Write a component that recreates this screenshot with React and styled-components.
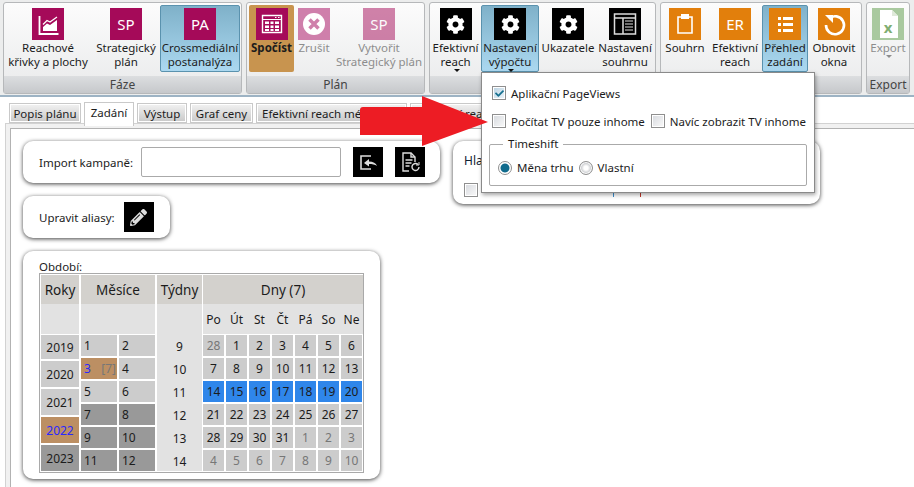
import styled, { createGlobalStyle } from 'styled-components';
import { FaCog, FaPencilAlt, FaCheck } from 'react-icons/fa';

const FONT = '"Noto Sans", "Open Sans", sans-serif';

const GlobalStyle = createGlobalStyle`
  html, body {
    background: #fff;
    height: 487px;
    margin: 0;
    overflow: hidden;
    width: 914px;
  }

  body {
    color: #1c1c1c;
    font-family: ${FONT};
    font-size: 11.5px;
  }
`;

const Page = styled.div`
  height: 487px;
  overflow: hidden;
  position: relative;
  width: 914px;
`;

/* ribbon */
const Ribbon = styled.div`
  background: #eceded;
  border-bottom: 2px solid #9db3c4;
  box-sizing: border-box;
  display: flex;
  gap: 4px;
  height: 97px;
  padding: 2px 0 0 3px;
`;

const Group = styled.section`
  background: linear-gradient(#fcfcfc, #e9eaeb);
  border: 1px solid #b6b8ba;
  border-radius: 3px;
  box-sizing: border-box;
  display: flex;
  flex-direction: column;
  height: 92px;
  width: ${(p) => p.$w}px;
`;

const GroupButtons = styled.div`
  display: flex;
  flex: 1;
  padding-top: 2px;
`;

const GroupLabel = styled.div`
  background: linear-gradient(#dcdee0, #c6c8cb);
  color: #444;
  font-size: 12px;
  height: 17px;
  line-height: 17px;
  text-align: center;
`;

const RibbonButton = styled.div`
  align-items: center;
  background: ${(p) =>
    p.$active ? 'linear-gradient(#7fb1c9, #abd8f0)' : p.$run ? '#c8944f' : 'transparent'};
  border: 1px solid ${(p) => (p.$active ? '#5a92ae' : 'transparent')};
  border-radius: 2px;
  box-sizing: border-box;
  color: ${(p) => (p.$off ? '#8d8d8d' : '#1c1c1c')};
  display: flex;
  flex-direction: column;
  font-weight: ${(p) => (p.$run ? 700 : 400)};
  height: 67px;
  line-height: 14px;
  margin-left: ${(p) => p.$ml || 0}px;
  padding-top: 2px;
  text-align: center;
  white-space: nowrap;
  width: ${(p) => p.$w}px;
`;

const IconTile = styled.div`
  align-items: center;
  background: ${(p) => p.$bg};
  color: #fff;
  display: flex;
  flex: none;
  font-size: 15px;
  height: 32px;
  justify-content: center;
  margin-bottom: 1px;
  opacity: ${(p) => (p.$off ? 0.5 : 1)};
  width: 32px;
`;

const Caret = styled.i`
  border-left: 3px solid transparent;
  border-right: 3px solid transparent;
  border-top: 3px solid ${(p) => (p.$off ? '#8d8d8d' : '#111')};
  display: inline-block;
  margin-left: 2px;
  vertical-align: 3px;
`;

/* tabs */
const TabBar = styled.div`
  align-items: flex-end;
  display: flex;
  gap: 3px;
  height: 21px;
  margin-top: 5px;
  padding-left: 9px;
  position: relative;
  z-index: 1;
`;

const Tab = styled.div`
  background: ${(p) => (p.$active ? '#fff' : 'linear-gradient(#f2f2f2, #c8c8c8)')};
  border: 1px solid #c9c9c9;
  border-bottom: ${(p) => (p.$active ? '0' : '1px solid #c9c9c9')};
  box-shadow: inset 0 0 0 1px #fff;
  box-sizing: border-box;
  flex: none;
  height: ${(p) => (p.$active ? 24 : 20)}px;
  line-height: 19px;
  margin-bottom: ${(p) => (p.$active ? -3 : 0)}px;
  padding-left: ${(p) => (p.$start ? 5 : 0)}px;
  text-align: ${(p) => (p.$start ? 'left' : 'center')};
  white-space: nowrap;
  width: ${(p) => p.$w}px;
`;

const TabPanel = styled.div`
  background: #f1f1f1;
  border: 1px solid #d2d2d2;
  box-sizing: border-box;
  height: 380px;
  margin-left: 5px;
  padding: 4px;
  width: 920px;
`;

const TabContent = styled.div`
  background: #fff;
  border: 1px solid #b2b2b2;
  box-sizing: border-box;
  display: flex;
  gap: 13px;
  height: 100%;
  padding: 12px 12px 0;
`;

const Column = styled.div`
  display: flex;
  flex-direction: column;
  gap: 13px;
`;

const Card = styled.div`
  background: #fff;
  border-radius: 10px;
  box-shadow: 0 1px 4px rgba(0, 0, 0, 0.75);
  box-sizing: border-box;
  width: ${(p) => p.$w}px;
`;

const FieldCard = styled(Card)`
  align-items: center;
  display: flex;
  height: 42px;
  padding: 0 15px 0 16px;
  white-space: nowrap;
`;

const ImportInput = styled.input`
  background: #fff;
  border: 1px solid #aaa;
  border-radius: 2px;
  box-sizing: border-box;
  height: 30px;
  margin: 0 12px 0 auto;
  width: 200px;
`;

const BlackButton = styled.div`
  align-items: center;
  background: #000;
  color: #ddd;
  display: flex;
  flex: none;
  font-size: 17px;
  height: 30px;
  justify-content: center;
  margin-left: ${(p) => p.$ml || 0}px;
  width: 30px;
`;

const MainCardLabel = styled.div`
  color: #1c1c1c;
  height: 13px;
  line-height: 14px;
`;

const MainCard = styled(Card)`
  height: 228px;
  padding: 9px 0 0 16px;
`;

const AsideCard = styled(Card)`
  height: 63px;
  padding: 11px 11px 0;
`;

const AsideTitle = styled.div`
  color: #123;
  font-size: 12px;
  height: 30px;
  line-height: 18px;
`;

const AsideRow = styled.div`
  align-items: flex-end;
  display: flex;
  height: 15px;
`;

const Descender = styled.i`
  background: ${(p) => p.$c};
  height: 4px;
  margin-left: ${(p) => p.$ml}px;
  width: 1px;
`;

/* calendar */
const Calendar = styled.div`
  border: 1px solid #a9a9a9;
  box-sizing: border-box;
  display: flex;
  height: 200px;
  padding: 1px;
  width: 325px;
`;

const CalColumn = styled.div`
  background: ${(p) => (p.$fill ? '#e2e2e2' : 'transparent')};
  display: flex;
  flex: none;
  flex-direction: column;
  margin-right: ${(p) => p.$mr || 0}px;
  width: ${(p) => p.$w}px;
`;

const CalHead = styled.div`
  align-items: center;
  background: #d3d1cd;
  display: flex;
  flex: none;
  font-size: 13.5px;
  height: 29px;
  justify-content: center;
`;

const CalSub = styled.div`
  background: #e2e2e2;
  display: grid;
  flex: none;
  font-size: 12px;
  grid-template-columns: repeat(7, 21px);
  column-gap: 2px;
  height: 30px;
  margin-bottom: 1px;
  place-items: center;
`;

const YearList = styled.div`
  display: grid;
  gap: 2px;
  grid-template-rows: 24px repeat(4, 26px);
`;

const MonthGrid = styled.div`
  display: grid;
  gap: 2px;
  grid-template-columns: 36px 36px;
  grid-auto-rows: 21px;
`;

const DayGrid = styled.div`
  display: grid;
  gap: 2px;
  grid-template-columns: repeat(7, 21px);
  grid-auto-rows: 21px;
`;

const WeekList = styled.div`
  display: grid;
  grid-auto-rows: 23px;
`;

const WeekNumber = styled.div`
  align-items: center;
  display: flex;
  font-size: 12px;
  justify-content: center;
`;

const tones = {
  light: '#cccccc',
  dark: '#999999',
  picked: '#bc8f63',
  blue: '#2f86ea',
};

const Cell = styled.div`
  align-items: center;
  background: ${(p) => tones[p.$tone]};
  color: ${(p) => (p.$picked ? '#2828ff' : p.$muted ? '#777' : '#1c1c1c')};
  display: flex;
  font-size: 12px;
  justify-content: ${(p) => (p.$left ? 'space-between' : 'center')};
  padding-left: ${(p) => (p.$left ? 3 : 0)}px;
  white-space: nowrap;
`;

const MonthTag = styled.span`
  color: #777;
  padding-right: 1px;
`;

/* dropdown */
const Menu = styled.div`
  background: #fff;
  border: 1px solid #8a8a8a;
  box-shadow: 1px 2px 4px rgba(0, 0, 0, 0.35);
  box-sizing: border-box;
  height: 121px;
  left: 481px;
  padding: 13px 7px 0 7px;
  position: absolute;
  top: 72px;
  width: 334px;
  z-index: 3;
`;

const MenuRow = styled.div`
  align-items: center;
  display: flex;
  gap: 6px;
  height: 14px;
  margin-bottom: 14px;
  padding-left: 3px;
`;

const Option = styled.label`
  align-items: center;
  display: flex;
  gap: 5px;
  white-space: nowrap;
`;

const Box = styled.span`
  align-items: center;
  background: ${(p) => (p.$on ? 'linear-gradient(135deg, #b9d2e2, #eef5fa)' : 'linear-gradient(135deg, #d6d9de, #fafafa)')};
  border: 1px solid #8f8f8f;
  box-shadow: inset 0 0 0 1px #fff;
  box-sizing: border-box;
  color: #17708f;
  display: flex;
  flex: none;
  font-size: 9px;
  height: 14px;
  justify-content: center;
  width: 14px;
`;

const Round = styled(Box)`
  background: ${(p) => (p.$on ? 'radial-gradient(#0f6a8c 0 4px, #fff 5px)' : 'radial-gradient(#fff 0 2px, #c9cbce 5px)')};
  border-radius: 50%;
`;

const Timeshift = styled.fieldset`
  border: 1px solid #aaa;
  border-radius: 2px;
  box-sizing: border-box;
  height: 49px;
  margin: -5px 0 0;
  padding: 9px 0 0 8px;
  width: 318px;
`;

const TimeshiftLegend = styled.legend`
  line-height: 14px;
  margin-left: 5px;
  padding: 0 5px;
`;

const RadioRow = styled.div`
  align-items: center;
  display: flex;
  gap: 5px;
`;

const Arrow = styled.svg`
  height: 60px;
  left: 358px;
  position: absolute;
  top: 92px;
  width: 132px;
  z-index: 4;
`;

/* drawings */
const MAGENTA = '#a50a59';
const ORANGE = '#e27f0c';

const ChartIcon = () => (
  <svg width="32" height="32" viewBox="0 0 32 32">
    <path d="M7.500 8v18h19" fill="none" stroke="#fff" strokeWidth="1.800" />
    <path d="M11 23v-4l4-3.500 3 1.500 7-5v11z" fill="#fff" />
    <path d="M11 16.500l4-4 3 1.500 7-5" fill="none" stroke="#fff" strokeWidth="1.300" />
  </svg>
);

const CalcIcon = () => (
  <svg width="32" height="32" viewBox="0 0 32 32" fill="#fff">
    <path d="M6.500 7.500h19v17h-19z" fill="none" stroke="#fff" strokeWidth="1.400" />
    <path d="M6.500 11.500h19" stroke="#fff" strokeWidth="1" />
    <path d="M19 9h1.500v1H19zM22 9h1.500v1H22zM9 13.500h4v2.500H9zM14.500 13.500h3v2.500h-3zM19 13.500h4v2.500h-4zM9 17.500h4V20H9zM14.500 17.500h3V20h-3zM19 17.500h4V20h-4zM9 21h4v2H9zM14.500 21h3v2h-3zM19 21h4v2h-4z" />
  </svg>
);

const CancelIcon = () => (
  <svg width="32" height="32" viewBox="0 0 32 32">
    <circle cx="16" cy="16" r="11" fill="#fff" />
    <path d="M11.500 11.500l9 9M20.500 11.500l-9 9" stroke="#cf7fab" strokeWidth="3.500" />
  </svg>
);

const SummaryIcon = () => (
  <svg width="32" height="32" viewBox="0 0 32 32" fill="none" stroke="#ddd">
    <path d="M5.500 6h21v20h-21z" strokeWidth="1.500" />
    <path d="M6 10h20M14 10v16" strokeWidth="1.500" />
    <path d="M16 13h8M16 16h8M16 19h8M16 22h8" strokeWidth="1.200" />
  </svg>
);

const ClipboardIcon = () => (
  <svg width="32" height="32" viewBox="0 0 32 32" fill="none" stroke="#fff" strokeWidth="1.600">
    <path d="M12 9H9v16h14V9h-3" />
    <path d="M12 6h8v5h-8z" fill="#fff" stroke="none" />
  </svg>
);

const ListIcon = () => (
  <svg width="32" height="32" viewBox="0 0 32 32" fill="#fff">
    <path d="M9 9h3v3H9zM9 15h3v3H9zM9 21h3v3H9zM14 9h10v3H14zM14 15h10v3H14zM14 21h10v3H14z" />
  </svg>
);

const RefreshIcon = () => (
  <svg width="32" height="32" viewBox="0 0 32 32" fill="none">
    <path d="M11 10.500A9 9 0 1 1 8 17" stroke="#fff" strokeWidth="2.600" />
    <path d="M7 7h8v8z" fill="#fff" />
  </svg>
);

const ExcelIcon = () => (
  <svg width="32" height="32" viewBox="0 0 32 32">
    <path d="M8 2h12l6 6v22H8z" fill="#fff" />
    <path d="M20 2v6h6z" fill="#dfe9da" />
    <text x="16" y="25" fontSize="15" fontWeight="700" fontFamily={FONT} textAnchor="middle" fill="#7fae72">x</text>
  </svg>
);

const ImportIcon = () => (
  <svg width="22" height="22" viewBox="0 0 22 22" fill="none" stroke="#ddd" strokeWidth="1.600">
    <path d="M14 5H4v13h10" />
    <path d="M20 15c-1-3-4-4.500-8-4.500V8l-5 4 5 3.500V13c3 0 6 .5 8 2z" fill="#ddd" stroke="none" />
  </svg>
);

const FileRefreshIcon = () => (
  <svg width="24" height="24" viewBox="0 0 24 24" fill="none" stroke="#ddd" strokeWidth="1.400">
    <path d="M11 21H5V3h8l4 4v5" />
    <path d="M13 3v4h4" />
    <path d="M7.500 10h7M7.500 13h6M7.500 16h4" />
    <path d="M21 17a3.500 3.500 0 1 1-1-2.500" />
    <path d="M21 12v3h-3" strokeWidth="1" />
  </svg>
);

const months = [
  { n: 1, tone: 'light' },
  { n: 2, tone: 'light' },
  { n: 3, tone: 'picked', tag: '[7]' },
  { n: 4, tone: 'light' },
  { n: 5, tone: 'light' },
  { n: 6, tone: 'light' },
  { n: 7, tone: 'dark' },
  { n: 8, tone: 'dark' },
  { n: 9, tone: 'dark' },
  { n: 10, tone: 'dark' },
  { n: 11, tone: 'dark' },
  { n: 12, tone: 'dark' },
];

const years = [
  { y: 2019, tone: 'light' },
  { y: 2020, tone: 'light' },
  { y: 2021, tone: 'light' },
  { y: 2022, tone: 'picked' },
  { y: 2023, tone: 'dark' },
];

const dayNames = ['Po', 'Út', 'St', 'Čt', 'Pá', 'So', 'Ne'];
const weeks = [9, 10, 11, 12, 13, 14];

const days = [
  28, 1, 2, 3, 4, 5, 6, 7, 8, 9, 10, 11, 12, 13, 14, 15, 16, 17, 18, 19, 20, 21, 22, 23, 24, 25, 26,
  27, 28, 29, 30, 31, 1, 2, 3, 4, 5, 6, 7, 8, 9, 10,
];

const isOtherMonth = (i) => i === 0 || i >= 32;
const isSelectedWeek = (i) => i >= 14 && i < 21;

function App() {
  return (
    <Page>
      <GlobalStyle />
      <Ribbon>
        <Group $w={239}>
          <GroupButtons>
            <RibbonButton $w={88}>
              <IconTile $bg={MAGENTA}><ChartIcon /></IconTile>
              Reachové<br />křivky a plochy
            </RibbonButton>
            <RibbonButton $w={68}>
              <IconTile $bg={MAGENTA}>SP</IconTile>
              Strategický<br />plán
            </RibbonButton>
            <RibbonButton $w={80} $active>
              <IconTile $bg={MAGENTA}>PA</IconTile>
              Crossmediální<br />postanalýza
            </RibbonButton>
          </GroupButtons>
          <GroupLabel>Fáze</GroupLabel>
        </Group>

        <Group $w={179}>
          <GroupButtons>
            <RibbonButton $w={45} $ml={2} $run>
              <IconTile $bg={MAGENTA}><CalcIcon /></IconTile>
              Spočíst
            </RibbonButton>
            <RibbonButton $w={40} $off>
              <IconTile $bg="#cf7fab"><CancelIcon /></IconTile>
              Zrušit
            </RibbonButton>
            <RibbonButton $w={90} $off>
              <IconTile $bg={MAGENTA} $off>SP</IconTile>
              Vytvořit<br />Strategický plán
            </RibbonButton>
          </GroupButtons>
          <GroupLabel>Plán</GroupLabel>
        </Group>

        <Group $w={227}>
          <GroupButtons>
            <RibbonButton $w={51}>
              <IconTile $bg="#000"><FaCog size={19} /></IconTile>
              Efektivní<br />reach<Caret />
            </RibbonButton>
            <RibbonButton $w={58} $active>
              <IconTile $bg="#000"><FaCog size={19} /></IconTile>
              Nastavení<br />výpočtu<Caret />
            </RibbonButton>
            <RibbonButton $w={58}>
              <IconTile $bg="#000"><FaCog size={19} /></IconTile>
              Ukazatele
            </RibbonButton>
            <RibbonButton $w={56}>
              <IconTile $bg="#000"><SummaryIcon /></IconTile>
              Nastavení<br />souhrnu
            </RibbonButton>
          </GroupButtons>
          <GroupLabel />
        </Group>

        <Group $w={202}>
          <GroupButtons>
            <RibbonButton $w={48}>
              <IconTile $bg={ORANGE}><ClipboardIcon /></IconTile>
              Souhrn
            </RibbonButton>
            <RibbonButton $w={52}>
              <IconTile $bg={ORANGE}>ER</IconTile>
              Efektivní<br />reach
            </RibbonButton>
            <RibbonButton $w={46} $ml={1} $active>
              <IconTile $bg={ORANGE}><ListIcon /></IconTile>
              Přehled<br />zadání
            </RibbonButton>
            <RibbonButton $w={52}>
              <IconTile $bg={ORANGE}><RefreshIcon /></IconTile>
              Obnovit<br />okna
            </RibbonButton>
          </GroupButtons>
          <GroupLabel />
        </Group>

        <Group $w={44}>
          <GroupButtons>
            <RibbonButton $w={42} $off>
              <IconTile $bg="#a9c99f"><ExcelIcon /></IconTile>
              Export<br /><Caret $off />
            </RibbonButton>
          </GroupButtons>
          <GroupLabel>Export</GroupLabel>
        </Group>
      </Ribbon>

      <TabBar>
        <Tab $w={72}>Popis plánu</Tab>
        <Tab $w={50} $active>Zadání</Tab>
        <Tab $w={50}>Výstup</Tab>
        <Tab $w={63}>Graf ceny</Tab>
        <Tab $w={151} $start>Efektivní reach médií</Tab>
        <Tab $w={110} $start>Efektivní reach</Tab>
      </TabBar>

      <TabPanel>
        <TabContent>
          <Column>
            <FieldCard $w={417}>
              Import kampaně:
              <ImportInput />
              <BlackButton><ImportIcon /></BlackButton>
              <BlackButton $ml={12}><FileRefreshIcon /></BlackButton>
            </FieldCard>
            <FieldCard $w={147}>
              Upravit aliasy:
              <BlackButton $ml={9}><FaPencilAlt /></BlackButton>
            </FieldCard>
            <MainCard $w={357}>
              <MainCardLabel>Období:</MainCardLabel>
              <Calendar>
                <CalColumn $w={38} $mr={2}>
                  <CalHead>Roky</CalHead>
                  <CalSub />
                  <YearList>
                    {years.map(({ y, tone }) => (
                      <Cell key={y} $tone={tone} $picked={tone === 'picked'}>{y}</Cell>
                    ))}
                  </YearList>
                </CalColumn>
                <CalColumn $w={74} $mr={2}>
                  <CalHead>Měsíce</CalHead>
                  <CalSub />
                  <MonthGrid>
                    {months.map(({ n, tone, tag }) => (
                      <Cell key={n} $left $tone={tone} $picked={tone === 'picked'}>
                        {n}
                        {tag && <MonthTag>{tag}</MonthTag>}
                      </Cell>
                    ))}
                  </MonthGrid>
                </CalColumn>
                <CalColumn $w={45} $mr={1} $fill>
                  <CalHead>Týdny</CalHead>
                  <CalSub />
                  <WeekList>
                    {weeks.map((w) => (
                      <WeekNumber key={w}>{w}</WeekNumber>
                    ))}
                  </WeekList>
                </CalColumn>
                <CalColumn $w={160}>
                  <CalHead>Dny (7)</CalHead>
                  <CalSub>
                    {dayNames.map((d) => (
                      <span key={d}>{d}</span>
                    ))}
                  </CalSub>
                  <DayGrid>
                    {days.map((d, i) => (
                      <Cell key={i} $tone={isSelectedWeek(i) ? 'blue' : 'light'} $muted={isOtherMonth(i)}>
                        {d}
                      </Cell>
                    ))}
                  </DayGrid>
                </CalColumn>
              </Calendar>
            </MainCard>
          </Column>
          <Column>
            <AsideCard $w={367}>
              <AsideTitle>Hla</AsideTitle>
              <AsideRow>
                <Box />
                <Descender $c="#3b8fd0" $ml={135} />
                <Descender $c="#c0392b" $ml={26} />
              </AsideRow>
            </AsideCard>
          </Column>
        </TabContent>
      </TabPanel>

      <Menu>
        <MenuRow>
          <Option><Box $on><FaCheck /></Box>Aplikační PageViews</Option>
        </MenuRow>
        <MenuRow>
          <Option><Box />Počítat TV pouze inhome</Option>
          <Option><Box />Navíc zobrazit TV inhome</Option>
        </MenuRow>
        <Timeshift>
          <TimeshiftLegend>Timeshift</TimeshiftLegend>
          <RadioRow>
            <Option><Round $on />Měna trhu</Option>
            <Option><Round />Vlastní</Option>
          </RadioRow>
        </Timeshift>
      </Menu>

      <Arrow viewBox="0 0 132 60">
        <path d="M2 18Q2 15 5 15H64V4L130 30 64 54V43H2z" fill="#ed1c24" />
      </Arrow>
    </Page>
  );
}

export default App;
